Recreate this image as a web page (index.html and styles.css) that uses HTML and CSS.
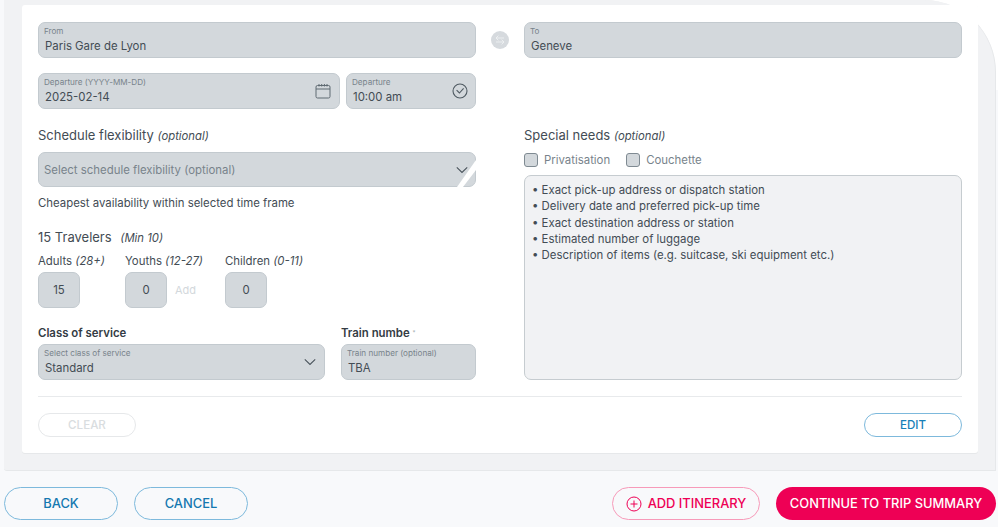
FILE: index.html
```html
<!DOCTYPE html>
<html>
<head>
    <title>Trip details</title>
    <link rel="stylesheet" href="styles.css">
</head>
<body>
    <div class="panel-wrap">
        <div class="panel">
            <form class="card">
                <div class="form-grid">
                    <div class="field">
                        <span class="field-label">From</span>
                        <span class="field-value">Paris Gare de Lyon</span>
                    </div>
                    <div class="swap-cell">
                        <span class="swap">
                            <svg width="10" height="10" viewBox="0 0 10 10" fill="none" stroke="#eef0f2" stroke-width=".9">
                                <path d="M9 3H1M3.4.6L1 3l2.4 2.4"/>
                                <path d="M1 7h8M6.6 4.6L9 7 6.6 9.4"/>
                            </svg>
                        </span>
                    </div>
                    <div class="field">
                        <span class="field-label">To</span>
                        <span class="field-value">Geneve</span>
                    </div>

                    <div class="date-row">
                        <div class="field field-date">
                            <span class="field-label">Departure (YYYY-MM-DD)</span>
                            <span class="field-value">2025-02-14</span>
                            <svg class="field-icon" width="16" height="16" viewBox="0 0 16 16" fill="none" stroke="#5f6a72" stroke-width="1">
                                <rect x="1" y="2.5" width="14" height="12.5" rx="1.5"/>
                                <path d="M1 6h14M4 1v2.5M6.7 1v2.5M9.4 1v2.5M12 1v2.5"/>
                            </svg>
                        </div>
                        <div class="field field-time">
                            <span class="field-label">Departure</span>
                            <span class="field-value">10:00 am</span>
                            <svg class="field-icon" width="16" height="16" viewBox="0 0 16 16" fill="none" stroke="#4f5a62" stroke-width="1.1">
                                <circle cx="8" cy="8" r="7"/>
                                <path d="M4.6 7.2L7.4 10l4.2-4.6"/>
                            </svg>
                        </div>
                    </div>

                    <div class="col-left">
                        <h2 class="section-title">Schedule flexibility <em>(optional)</em></h2>
                        <div class="field field-select">
                            <span class="placeholder">Select schedule flexibility (optional)</span>
                            <svg class="field-icon" width="12" height="7" viewBox="0 0 12 7" fill="none" stroke="#4a545c" stroke-width="1.1">
                                <path d="M.8.8L6 6 11.2.8"/>
                            </svg>
                            <svg class="slash" width="19" height="27" viewBox="0 0 19 27" fill="#fff">
                                <path d="M19 0L0 27h6l13-17z"/>
                            </svg>
                        </div>
                        <p class="hint">Cheapest availability within selected time frame</p>

                        <h2 class="section-title travelers-title">15 Travelers <em>(Min 10)</em></h2>
                        <div class="travelers">
                            <div class="traveler adults">
                                <span class="traveler-label">Adults <em>(28+)</em></span>
                                <span class="count">15</span>
                            </div>
                            <div class="traveler youths">
                                <span class="traveler-label">Youths <em>(12-27)</em></span>
                                <div class="count-row">
                                    <span class="count">0</span>
                                    <span class="add">Add</span>
                                </div>
                            </div>
                            <div class="traveler">
                                <span class="traveler-label">Children <em>(0-11)</em></span>
                                <span class="count">0</span>
                            </div>
                        </div>

                        <div class="service-row">
                            <div class="service-class">
                                <h3 class="sub-title">Class of service</h3>
                                <div class="field">
                                    <span class="field-label">Select class of service</span>
                                    <span class="field-value">Standard</span>
                                    <svg class="field-icon" width="12" height="7" viewBox="0 0 12 7" fill="none" stroke="#4a545c" stroke-width="1.1">
                                        <path d="M.8.8L6 6 11.2.8"/>
                                    </svg>
                                </div>
                            </div>
                            <div class="service-train">
                                <h3 class="sub-title">Train numbe <small>*</small></h3>
                                <div class="field">
                                    <span class="field-label">Train number (optional)</span>
                                    <span class="field-value">TBA</span>
                                </div>
                            </div>
                        </div>
                    </div>

                    <div class="col-right">
                        <h2 class="section-title">Special needs <em>(optional)</em></h2>
                        <div class="checks">
                            <label class="check"><span class="box"></span>Privatisation</label>
                            <label class="check"><span class="box"></span>Couchette</label>
                        </div>
                        <div class="notes">
                            <div>&bull; Exact pick-up address or dispatch station</div>
                            <div>&bull; Delivery date and preferred pick-up time</div>
                            <div>&bull; Exact destination address or station</div>
                            <div>&bull; Estimated number of luggage</div>
                            <div>&bull; Description of items (e.g. suitcase, ski equipment etc.)</div>
                        </div>
                    </div>
                </div>

                <div class="card-actions">
                    <button type="button" class="btn-small btn-disabled">CLEAR</button>
                    <button type="button" class="btn-small btn-edit">EDIT</button>
                </div>
            </form>
        </div>
    </div>

    <footer class="bottom-bar">
        <div class="bar-group">
            <button type="button" class="btn btn-blue">BACK</button>
            <button type="button" class="btn btn-blue">CANCEL</button>
        </div>
        <div class="bar-group">
            <button type="button" class="btn btn-pink">
                <svg width="16" height="16" viewBox="0 0 16 16" fill="none" stroke="#ee0055" stroke-width="1">
                    <circle cx="8" cy="8" r="7"/>
                    <path d="M8 4.5v7M4.5 8h7"/>
                </svg>
                ADD ITINERARY
            </button>
            <button type="button" class="btn btn-solid">CONTINUE TO TRIP SUMMARY</button>
        </div>
    </footer>
</body>
</html>
```

FILE: styles.css
```css
* { box-sizing: border-box; }
html, body { height: 100%; }
body { margin: 0; background: #f8f9fb; color: #434c54; font-family: Inter, "Liberation Sans", sans-serif; font-size: 11.4px; overflow: hidden; }
em { font-style: italic; font-size: 11.3px; line-height: 1; }

.panel-wrap { padding: 0 2px 0 4px; background: linear-gradient(#fff, #fff) top right / 90px 90px no-repeat; }
.panel { height: 471px; padding: 5px 17px 17px 18px; background: #f1f2f4; border-right: 1px solid #e6e8ea; border-bottom: 1px solid #e6e8ea; border-radius: 0 72px 0 3px; }
.card { height: 448px; padding: 17px 17px 0 16px; background: #fff; border-radius: 3px; box-shadow: 0 1px 0 #e6e8ea; }

.form-grid { display: grid; grid-template-columns: 438px 48px 438px; grid-template-rows: auto auto 1fr; height: 374px; }
.field { position: relative; display: flex; flex-direction: column; height: 36px; padding: 3px 5px 0; background: #d3d8dc; border: 1px solid #c3cacf; border-radius: 7px; }
.field-label { font-size: 8.15px; line-height: 10px; color: #78838b; white-space: nowrap; }
.field-value { margin: 3px 0 0 1px; font-size: 11.4px; line-height: 15px; color: #434c54; }
.field-icon { position: absolute; right: 8px; top: 50%; transform: translateY(-50%); }

.swap-cell { display: flex; align-items: center; justify-content: center; }
.swap { display: flex; align-items: center; justify-content: center; width: 18px; height: 18px; margin-top: -1px; background: #d6dade; border-radius: 50%; }

.date-row { grid-column: 1; display: flex; gap: 6px; margin-top: 15px; }
.field-date { width: 302px; }
.field-time { width: 130px; }
.field-time .field-icon { right: 7px; }

.col-left { grid-column: 1; }
.col-right { grid-column: 3; }
.section-title { margin: 18px 0 8px; font-size: 13px; line-height: 17px; font-weight: 400; color: #434c54; }

.field-select { justify-content: center; height: 35px; padding: 0 5px; }
.placeholder { font-size: 11.4px; color: #78838b; }
.field-select .field-icon { right: 7px; }
.slash { position: absolute; right: -1px; bottom: -1px; }
.hint { margin: 9px 0 0; font-size: 11.4px; line-height: 15px; color: #434c54; }

.travelers-title { margin: 18px 0 7px; }
.travelers-title em { margin-left: 5px; }
.travelers { display: flex; }
.traveler { display: flex; flex-direction: column; }
.adults { width: 87px; }
.youths { width: 100px; }
.traveler-label { height: 19px; font-size: 11.4px; line-height: 17px; white-space: nowrap; }
.count-row { display: flex; align-items: center; gap: 8px; }
.count { display: flex; align-items: center; justify-content: center; width: 42px; height: 36px; background: #d3d8dc; border: 1px solid #c3cacf; border-radius: 7px; font-size: 11.4px; }
.add { font-size: 11px; color: #d3d8dc; }

.service-row { display: flex; gap: 16px; margin-top: 17px; }
.service-class { width: 287px; }
.service-train { width: 135px; }
.sub-title { margin: 0 0 3px; font-size: 11.4px; line-height: 16px; font-weight: 600; color: #343c44; white-space: nowrap; }
.sub-title small { font-size: 6px; font-weight: 400; color: #9aa3aa; vertical-align: top; }

.checks { display: flex; gap: 16px; height: 23px; }
.check { display: flex; align-items: center; gap: 6px; height: 16px; font-size: 11.4px; color: #78838b; }
.box { width: 14px; height: 14px; background: #d3d8dc; border: 1px solid #7f8a92; border-radius: 3px; }
.notes { height: 205px; padding: 6px 7px; background: #f1f2f4; border: 1px solid #c6ccd0; border-radius: 7px; font-size: 11.4px; line-height: 16.25px; color: #434c54; }

.card-actions { display: flex; justify-content: space-between; align-items: flex-start; width: 924px; height: 57px; padding-top: 16px; border-top: 1px solid #e8eaec; }
.btn-small { width: 98px; height: 24px; padding: 0; background: #fff; border-radius: 12px; font-family: inherit; font-size: 11.6px; font-weight: 500; }
.btn-disabled { border: 1px solid #e6e8ea; color: #d9dde0; }
.btn-edit { border: 1px solid #7db9dc; color: #1780b8; }

.bottom-bar { display: flex; justify-content: space-between; align-items: center; padding: 16px 2px 0 4px; }
.bar-group { display: flex; gap: 16px; }
.btn { display: flex; align-items: center; justify-content: center; gap: 6px; height: 33px; padding: 0; background: transparent; border-radius: 17px; font-family: inherit; font-size: 12.9px; font-weight: 500; }
.btn-blue { width: 114px; border: 1.5px solid #7db9dc; color: #1478b0; }
.btn-pink { width: 148px; border: 1.5px solid #f79ab9; color: #ee0055; }
.btn-solid { width: 220px; background: #ee0055; border: none; color: #fff; }
```
